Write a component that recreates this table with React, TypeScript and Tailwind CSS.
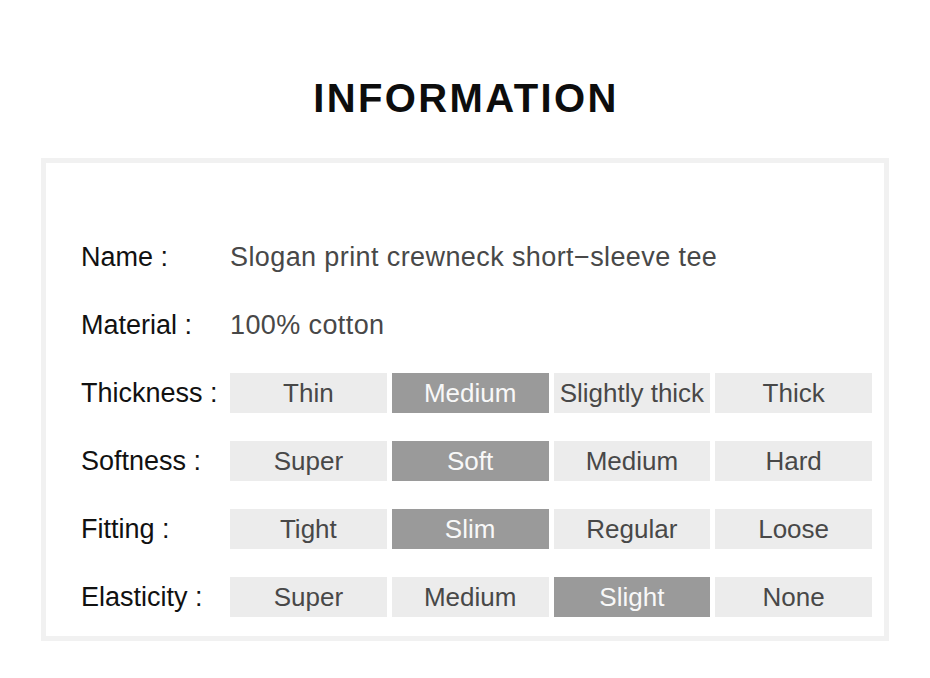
import React from "react";

const rows: { label: string; options: string[]; selected: number }[] = [
  { label: "Thickness :", options: ["Thin", "Medium", "Slightly thick", "Thick"], selected: 1 },
  { label: "Softness :", options: ["Super", "Soft", "Medium", "Hard"], selected: 1 },
  { label: "Fitting :", options: ["Tight", "Slim", "Regular", "Loose"], selected: 1 },
  { label: "Elasticity :", options: ["Super", "Medium", "Slight", "None"], selected: 2 },
];

export default function App() {
  return (
    <div
      className="w-[930px] h-[678px] bg-white overflow-hidden"
      style={{ fontFamily: '"Liberation Sans", Arial, sans-serif' }}
    >
      <div className="pt-[78px] h-[158px]">
        <h1 className="text-center text-[40px] leading-[40px] font-bold tracking-[2.4px] pl-[2px] text-[#0d0d0d]">
          INFORMATION
        </h1>
      </div>
      <div className="mx-[41px] h-[483px] border-[5px] border-[#f1f1f1] pt-[74px] pl-[35px] flex flex-col gap-[28px]">
        <div className="flex h-[40px] items-center">
          <div className="w-[149px] text-[27px] leading-[40px] text-[#111]">Name :</div>
          <div className="text-[27px] leading-[40px] text-[#484848] tracking-[0.4px]">
            Slogan print crewneck short−sleeve tee
          </div>
        </div>
        <div className="flex h-[40px] items-center">
          <div className="w-[149px] text-[27px] leading-[40px] text-[#111]">Material :</div>
          <div className="text-[27px] leading-[40px] text-[#484848] tracking-[0.4px]">100% cotton</div>
        </div>
        {rows.map((r) => (
          <div key={r.label} className="flex h-[40px] items-center">
            <div className="w-[149px] text-[27px] leading-[40px] text-[#111] whitespace-nowrap">{r.label}</div>
            <div className="grid grid-cols-4 gap-[5px] w-[642px]">
              {r.options.map((o, i) => (
                <div
                  key={o + i}
                  className={
                    i === r.selected
                      ? "h-[40px] flex items-center justify-center bg-[#9a9a9a] text-[#f8f8f8] text-[26px] whitespace-nowrap"
                      : "h-[40px] flex items-center justify-center bg-[#ececec] text-[#484848] text-[26px] whitespace-nowrap"
                  }
                >
                  {o}
                </div>
              ))}
            </div>
          </div>
        ))}
      </div>
    </div>
  );
}
